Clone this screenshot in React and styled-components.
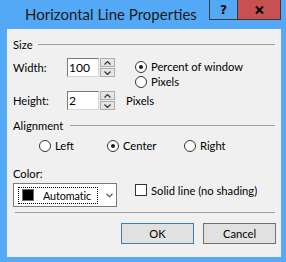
import styled, { createGlobalStyle } from "styled-components";

const GlobalStyle = createGlobalStyle`
  html, body {
    margin: 0;
    padding: 0;
  }
  body {
    width: 286px;
    height: 262px;
    overflow: hidden;
    background: #53a9f5;
    font-family: Lato, "Noto Sans", sans-serif;
    color: #000;
  }
`;

const Frame = styled.div`
  width: 286px;
  height: 262px;
  box-sizing: border-box;
  background: #53a9f5;
  padding: 0 5px 5px 7px;
  display: flex;
  flex-direction: column;
`;

const TitleBar = styled.div`
  height: 29px;
  display: flex;
  align-items: flex-start;
`;

const Title = styled.div`
  flex: 1;
  margin: 4px 0 0 18px;
  font-size: 15px;
  line-height: 20px;
  color: #1b1b1b;
`;

const CaptionButton = styled.div`
  width: ${(p) => p.$w}px;
  height: 20px;
  box-sizing: border-box;
  border: 1px solid #3a3a3a;
  border-top: none;
  border-left: ${(p) => (p.$joined ? "none" : "1px solid #3a3a3a")};
  background: ${(p) => (p.$close ? "#c75050" : "transparent")};
  display: flex;
  align-items: center;
  justify-content: center;
  font-family: "DejaVu Sans", sans-serif;
  font-weight: bold;
  font-size: 12px;
  color: #000;
`;

const Client = styled.div`
  flex: 1;
  background: #f0f0f0;
  padding: 8px 5px 0 6px;
  display: flex;
  flex-direction: column;
  font-size: 11.2px;
`;

const GroupHeader = styled.div`
  display: flex;
  align-items: center;
  gap: ${(p) => p.$gap}px;
  height: 15px;
  line-height: 15px;
  margin-top: ${(p) => p.$top || 0}px;
  &::after {
    content: "";
    flex: 1;
    height: 1px;
    margin-right: 1px;
    background: #a0a0a0;
  }
`;

const SizeBody = styled.div`
  display: grid;
  grid-template-columns: 54px 48px 1fr;
  grid-template-rows: 19px 19px;
  row-gap: 14px;
  margin-top: 6px;
`;

const Label = styled.div`
  line-height: 19px;
  margin-left: ${(p) => p.$left || 0}px;
`;

const SpinBox = styled.div`
  display: flex;
  gap: 1px;
`;

const TextBox = styled.div`
  width: 32px;
  height: 19px;
  box-sizing: border-box;
  border: 1px solid;
  border-color: #7a7a7a #d6d6d6 #d6d6d6 #7a7a7a;
  background: #fff;
  padding-left: 1px;
  line-height: 17px;
  font-size: 12px;
`;

const Spinner = styled.div`
  width: 15px;
  display: flex;
  flex-direction: column;
  gap: 1px;
`;

const SpinButton = styled.div`
  flex: 1;
  box-sizing: border-box;
  border: 1px solid #adadad;
  background: #e5e5e5;
  display: flex;
  align-items: center;
  justify-content: center;
`;

const RadioStack = styled.div`
  grid-column: 3;
  grid-row: 1 / 3;
  margin-left: 20px;
  padding-top: 1px;
  display: flex;
  flex-direction: column;
`;

const Option = styled.label`
  display: flex;
  align-items: center;
  gap: 4px;
  height: 15px;
  width: ${(p) => (p.$w ? `${p.$w}px` : "auto")};
  flex: none;
`;

const RadioCircle = styled.span`
  width: 12px;
  height: 12px;
  box-sizing: border-box;
  border: 1px solid #333;
  border-radius: 50%;
  background: #fff;
  display: flex;
  align-items: center;
  justify-content: center;
  &::after {
    content: "";
    width: 4px;
    height: 4px;
    border-radius: 50%;
    background: ${(p) => (p.$on ? "#1a1a1a" : "transparent")};
  }
`;

const PixelsLabel = styled(Label)`
  grid-column: 3;
  grid-row: 2;
`;

const AlignRow = styled.div`
  display: flex;
  margin: 5px 0 0 26px;
`;

const ColorLabel = styled(Label)`
  margin-top: 13px;
  line-height: 15px;
`;

const ColorRow = styled.div`
  display: flex;
  align-items: flex-start;
  margin-top: 2px;
`;

const Dropdown = styled.div`
  width: 104px;
  height: 24px;
  box-sizing: border-box;
  border: 1px solid #7a7a7a;
  background: #fff;
  display: flex;
  align-items: center;
  padding-left: 4px;
`;

const FocusBox = styled.div`
  width: 80px;
  height: 17px;
  box-sizing: border-box;
  border: 1px dotted #000;
  display: flex;
  align-items: center;
  padding-left: 3px;
  gap: 9px;
  font-size: 10.8px;
  letter-spacing: -0.1px;
`;

const Swatch = styled.span`
  width: 12px;
  height: 12px;
  box-sizing: border-box;
  background: #000;
  border: 1px solid #6d6d6d;
`;

const Chevron = styled.svg`
  margin-left: 8px;
`;

const CheckOption = styled(Option)`
  margin: 1px 0 0 18px;
  height: 12px;
`;

const CheckBox = styled.span`
  width: 12px;
  height: 12px;
  box-sizing: border-box;
  border: 1px solid #333;
  background: #fff;
`;

const Separator = styled.div`
  height: 1px;
  background: #a0a0a0;
  margin: 5px 1px 0 2px;
`;

const ButtonRow = styled.div`
  display: flex;
  justify-content: flex-end;
  gap: 9px;
  margin-top: 10px;
`;

const Button = styled.div`
  width: 73px;
  height: 21px;
  box-sizing: border-box;
  border: 1px solid ${(p) => (p.$default ? "#3c7fb1" : "#707070")};
  background: #e1e1e1;
  display: flex;
  align-items: center;
  justify-content: center;
`;

const Caret = ({ down }) => (
  <svg width="7" height="4" viewBox="0 0 7 4">
    <polyline
      points={down ? "0.5,0.5 3.5,3.5 6.5,0.5" : "0.5,3.5 3.5,0.5 6.5,3.5"}
      fill="none"
      stroke="#333"
      strokeWidth="1.2"
    />
  </svg>
);

const Spin = ({ value }) => (
  <SpinBox>
    <TextBox>{value}</TextBox>
    <Spinner>
      <SpinButton>
        <Caret />
      </SpinButton>
      <SpinButton>
        <Caret down />
      </SpinButton>
    </Spinner>
  </SpinBox>
);

function App() {
  return (
    <>
      <GlobalStyle />
      <Frame>
        <TitleBar>
          <Title>Horizontal Line Properties</Title>
          <CaptionButton $w={29}>?</CaptionButton>
          <CaptionButton $w={43} $joined $close>
            <svg width="9" height="8" viewBox="0 0 9 8">
              <path d="M1 0.5 L8 7.5 M8 0.5 L1 7.5" stroke="#000" strokeWidth="2" />
            </svg>
          </CaptionButton>
        </TitleBar>
        <Client>
          <GroupHeader $gap={5}>Size</GroupHeader>
          <SizeBody>
            <Label>Width:</Label>
            <Spin value="100" />
            <RadioStack>
              <Option>
                <RadioCircle $on />
                Percent of window
              </Option>
              <Option>
                <RadioCircle />
                Pixels
              </Option>
            </RadioStack>
            <Label>Height:</Label>
            <Spin value="2" />
            <PixelsLabel $left={11}>Pixels</PixelsLabel>
          </SizeBody>
          <GroupHeader $gap={7} $top={8}>
            Alignment
          </GroupHeader>
          <AlignRow>
            <Option $w={68}>
              <RadioCircle />
              Left
            </Option>
            <Option $w={77}>
              <RadioCircle $on />
              Center
            </Option>
            <Option>
              <RadioCircle />
              Right
            </Option>
          </AlignRow>
          <ColorLabel>Color:</ColorLabel>
          <ColorRow>
            <Dropdown>
              <FocusBox>
                <Swatch />
                Automatic
              </FocusBox>
              <Chevron width="7" height="5" viewBox="0 0 7 5">
                <polyline points="0.5,0.8 3.5,3.8 6.5,0.8" fill="none" stroke="#6a6a6a" strokeWidth="1.5" />
              </Chevron>
            </Dropdown>
            <CheckOption>
              <CheckBox />
              Solid line (no shading)
            </CheckOption>
          </ColorRow>
          <Separator />
          <ButtonRow>
            <Button $default>OK</Button>
            <Button>Cancel</Button>
          </ButtonRow>
        </Client>
      </Frame>
    </>
  );
}

export default App;
